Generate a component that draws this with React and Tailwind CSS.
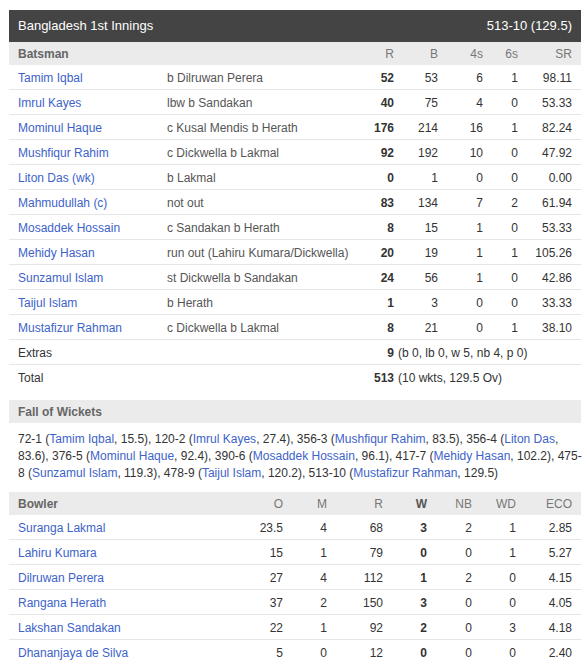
import React from "react";

const batsmen = [
  ["Tamim Iqbal", "b Dilruwan Perera", 52, 53, 6, 1, "98.11"],
  ["Imrul Kayes", "lbw b Sandakan", 40, 75, 4, 0, "53.33"],
  ["Mominul Haque", "c Kusal Mendis b Herath", 176, 214, 16, 1, "82.24"],
  ["Mushfiqur Rahim", "c Dickwella b Lakmal", 92, 192, 10, 0, "47.92"],
  ["Liton Das (wk)", "b Lakmal", 0, 1, 0, 0, "0.00"],
  ["Mahmudullah (c)", "not out", 83, 134, 7, 2, "61.94"],
  ["Mosaddek Hossain", "c Sandakan b Herath", 8, 15, 1, 0, "53.33"],
  ["Mehidy Hasan", "run out (Lahiru Kumara/Dickwella)", 20, 19, 1, 1, "105.26"],
  ["Sunzamul Islam", "st Dickwella b Sandakan", 24, 56, 1, 0, "42.86"],
  ["Taijul Islam", "b Herath", 1, 3, 0, 0, "33.33"],
  ["Mustafizur Rahman", "c Dickwella b Lakmal", 8, 21, 0, 1, "38.10"],
];

const bowlers = [
  ["Suranga Lakmal", "23.5", 4, 68, 3, 2, 1, "2.85"],
  ["Lahiru Kumara", "15", 1, 79, 0, 0, 1, "5.27"],
  ["Dilruwan Perera", "27", 4, 112, 1, 2, 0, "4.15"],
  ["Rangana Herath", "37", 2, 150, 3, 0, 0, "4.05"],
  ["Lakshan Sandakan", "22", 1, 92, 2, 0, 3, "4.18"],
  ["Dhananjaya de Silva", "5", 0, 12, 0, 0, 0, "2.40"],
];

// fall of wickets, split into the three lines seen on the card
const fow = [
  [["72-1 (", "Tamim Iqbal", ", 15.5), 120-2 ("], ["Imrul Kayes", ", 27.4), 356-3 ("], ["Mushfiqur Rahim", ", 83.5), 356-4 ("], ["Liton Das", ","]],
  [["83.6), 376-5 (", "Mominul Haque", ", 92.4), 390-6 ("], ["Mosaddek Hossain", ", 96.1), 417-7 ("], ["Mehidy Hasan", ", 102.2), 475-"]],
  [["8 (", "Sunzamul Islam", ", 119.3), 478-9 ("], ["Taijul Islam", ", 120.2), 513-10 ("], ["Mustafizur Rahman", ", 129.5)"]],
];

const link = "text-[#3d63c9]";
const batGrid = "grid grid-cols-[149px_200px_45px_44px_45px_35px_54px]";
const bowlGrid = "grid grid-cols-[238px_45px_44px_56px_44px_45px_44px_56px]";

function Cell({ className = "", children }) {
  return <div className={`px-[9px] pt-px flex items-center whitespace-nowrap ${className}`}>{children}</div>;
}

export default function App() {
  return (
    <div className="bg-white min-h-[672px] pt-[10px] pl-[9px] text-[12px] text-[#333]" style={{ fontFamily: '"Liberation Sans", Arial, sans-serif' }}>
      <div className="w-[572px]">
        {/* Innings header */}
        <div className="h-[32px] bg-[#444] text-white text-[13px] flex items-center justify-between px-[9px]">
          <span>Bangladesh 1st Innings</span>
          <span>513-10 (129.5)</span>
        </div>

        {/* Batting table */}
        <div className={`${batGrid} h-[23px] bg-[#ebebeb] text-[#777]`}>
          <Cell className="font-bold text-[#666] col-span-2">Batsman</Cell>
          <Cell className="justify-end">R</Cell>
          <Cell className="justify-end">B</Cell>
          <Cell className="justify-end">4s</Cell>
          <Cell className="justify-end">6s</Cell>
          <Cell className="justify-end">SR</Cell>
        </div>
        {batsmen.map((b) => (
          <div key={b[0]} className={`${batGrid} h-[25px] border-b border-[#e6e6e6]`}>
            <Cell className={link}>{b[0]}</Cell>
            <Cell className="text-[#555]">{b[1]}</Cell>
            <Cell className="justify-end font-bold">{b[2]}</Cell>
            <Cell className="justify-end">{b[3]}</Cell>
            <Cell className="justify-end">{b[4]}</Cell>
            <Cell className="justify-end">{b[5]}</Cell>
            <Cell className="justify-end">{b[6]}</Cell>
          </div>
        ))}
        <div className={`${batGrid} h-[25px] border-b border-[#e6e6e6]`}>
          <Cell className="col-span-2">Extras</Cell>
          <div className="col-span-5 pt-px flex items-center whitespace-nowrap">
            <span className="w-[36px] text-right font-bold">9</span>
            <span className="ml-[4px]">(b 0, lb 0, w 5, nb 4, p 0)</span>
          </div>
        </div>
        <div className={`${batGrid} h-[25px]`}>
          <Cell className="col-span-2">Total</Cell>
          <div className="col-span-5 pt-px flex items-center whitespace-nowrap">
            <span className="w-[36px] text-right font-bold">513</span>
            <span className="ml-[4px]">(10 wkts, 129.5 Ov)</span>
          </div>
        </div>

        {/* Fall of wickets */}
        <div className="mt-[10px] h-[23px] bg-[#ebebeb] px-[9px] pt-px flex items-center font-bold text-[#666]">
          Fall of Wickets
        </div>
        <div className="px-[9px] pt-[8px] pb-[10px] leading-[17px]">
          {fow.map((line, i) => (
            <div key={i} className="whitespace-nowrap">
              {line.map((part, j) => (
                <React.Fragment key={j}>
                  {part.length === 3 ? (
                    <>
                      {part[0]}
                      <span className={link}>{part[1]}</span>
                      {part[2]}
                    </>
                  ) : (
                    <>
                      <span className={link}>{part[0]}</span>
                      {part[1]}
                    </>
                  )}
                </React.Fragment>
              ))}
            </div>
          ))}
        </div>

        {/* Bowling table */}
        <div className={`${bowlGrid} h-[23px] bg-[#ebebeb] text-[#777]`}>
          <Cell className="font-bold text-[#666]">Bowler</Cell>
          <Cell className="justify-end">O</Cell>
          <Cell className="justify-end">M</Cell>
          <Cell className="justify-end">R</Cell>
          <Cell className="justify-end font-bold text-[#555]">W</Cell>
          <Cell className="justify-end">NB</Cell>
          <Cell className="justify-end">WD</Cell>
          <Cell className="justify-end">ECO</Cell>
        </div>
        {bowlers.map((b, i) => (
          <div key={b[0]} className={`${bowlGrid} h-[25px] ${i < bowlers.length - 1 ? "border-b border-[#e6e6e6]" : ""}`}>
            <Cell className={link}>{b[0]}</Cell>
            <Cell className="justify-end">{b[1]}</Cell>
            <Cell className="justify-end">{b[2]}</Cell>
            <Cell className="justify-end">{b[3]}</Cell>
            <Cell className="justify-end font-bold">{b[4]}</Cell>
            <Cell className="justify-end">{b[5]}</Cell>
            <Cell className="justify-end">{b[6]}</Cell>
            <Cell className="justify-end">{b[7]}</Cell>
          </div>
        ))}
      </div>
    </div>
  );
}
